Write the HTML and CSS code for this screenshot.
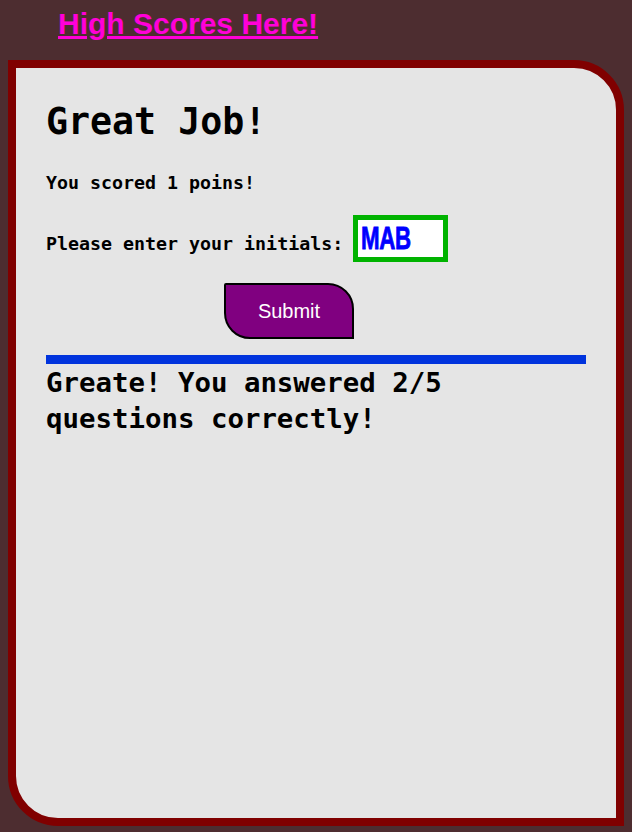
FILE: index.html
```html
<!DOCTYPE html>
<html lang="en">
<head>
<meta charset="utf-8">
<title>Quiz Results</title>
<link rel="stylesheet" href="styles.css">
</head>
<body>
<header class="top">
  <a class="scores-link" href="#">High Scores Here!</a>
</header>
<main class="card">
  <h1 class="title">Great Job!</h1>
  <p class="score">You scored 1 poins!</p>
  <form class="entry">
    <p class="initials-row"><label for="initials">Please enter your initials:</label><span id="initials" class="initials" role="textbox" contenteditable="true"><span class="initials-text">MAB</span></span></p>
    <button type="button" class="submit">Submit</button>
  </form>
  <div class="divider"></div>
  <h2 class="result">Greate! You answered 2/5 questions correctly!</h2>
</main>
</body>
</html>
```

FILE: styles.css
```css
html, body {
  margin: 0;
  padding: 0;
}

body {
  background: #4d2d30;
  font-family: "DejaVu Sans Mono", "Liberation Mono", monospace;
  height: 832px;
  overflow: hidden;
}

.top {
  box-sizing: border-box;
  height: 60px;
  padding: 7px 0 0 58px;
}

.scores-link {
  font-family: "Liberation Sans", Arial, sans-serif;
  font-weight: bold;
  font-size: 30px;
  line-height: 34px;
  color: #ff00d8;
  text-decoration: underline;
}

.card {
  box-sizing: border-box;
  height: 766px;
  margin: 0 8px;
  background: #e5e5e5;
  border: 8px solid #800000;
  border-radius: 0 50px 0 50px;
  padding: 33px 30px 0;
  color: #000;
}

.title {
  margin: 0;
  font-size: 36.6px;
  line-height: 42px;
  font-weight: bold;
}

.score {
  margin: 29px 0 0;
  font-size: 18.3px;
  line-height: 21px;
  font-weight: bold;
}

.entry {
  margin: 0;
}

.initials-row {
  margin: 22px 0 0;
  font-size: 18.3px;
  line-height: 21px;
  font-weight: bold;
}

.initials {
  display: inline-block;
  box-sizing: border-box;
  width: 95px;
  height: 47px;
  margin-left: 10px;
  padding: 0 3px;
  border: 5px solid #00b300;
  background: #fff;
  color: #0000ff;
  font-family: "Liberation Sans", Arial, sans-serif;
  font-weight: bold;
  font-size: 31px;
  line-height: 37px;
  vertical-align: -12px;
  outline: none;
  white-space: nowrap;
  overflow: hidden;
}

.initials-text {
  display: inline-block;
  transform: scaleX(0.72) scaleY(1.02);
  transform-origin: 0 50%;
  letter-spacing: -0.5px;
  -webkit-text-stroke: 0.8px #0000ff;
}

.submit {
  display: block;
  box-sizing: border-box;
  width: 130px;
  height: 56px;
  margin: 21px 0 0 178px;
  padding: 0;
  background: #800080;
  color: #fff;
  border: 2px solid #000;
  border-radius: 2px 26px 0 26px;
  font-family: "Liberation Sans", Arial, sans-serif;
  font-size: 20px;
}

.divider {
  height: 9px;
  margin-top: 16px;
  background: #0033dd;
}

.result {
  margin: 1px 0 0;
  font-size: 27.4px;
  line-height: 36px;
  font-weight: bold;
  max-width: 440px;
}
```
